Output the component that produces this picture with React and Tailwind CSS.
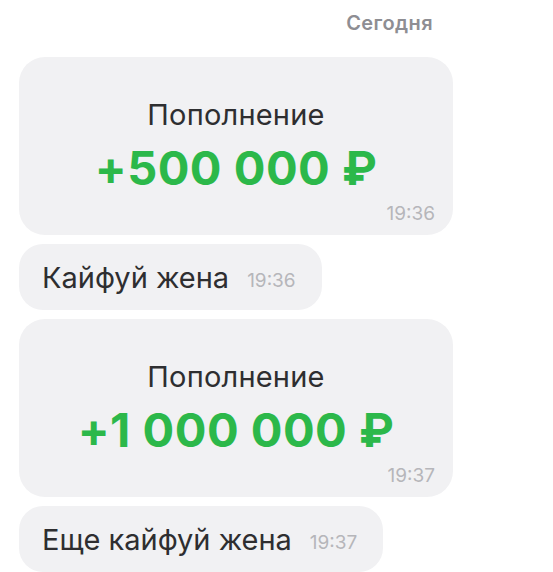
const font = { fontFamily: 'Inter, "Noto Sans", sans-serif' }

function Transfer({ amount, time }) {
  return (
    <div className="w-[434px] h-[178px] rounded-[26px] bg-[#f1f1f3] flex flex-col items-center pt-[41px] relative">
      <div className="text-[29px] leading-[34px] text-[#2e2e30] tracking-[0.2px]">Пополнение</div>
      <div className="text-[47px] leading-[52px] font-bold text-[#2cb84a] mt-[10px] tracking-[0.5px]">{amount}</div>
      <div className="absolute right-[18px] bottom-[7px] text-[19px] text-[#b6b6ba]">{time}</div>
    </div>
  )
}

function Message({ text, time }) {
  return (
    <div className="self-start h-[66px] rounded-[24px] bg-[#f1f1f3] flex items-center pl-[23px] pr-[26px] gap-[18px]">
      <span className="text-[29px] text-[#2e2e30] leading-none">{text}</span>
      <span className="text-[19px] text-[#b6b6ba] leading-none mt-[6px]">{time}</span>
    </div>
  )
}

export default function App() {
  return (
    <div className="w-[553px] h-[572px] bg-white overflow-hidden" style={font}>
      <div className="flex justify-end pr-[120px] pt-[11px]">
        <span className="text-[20px] leading-[24px] font-semibold text-[#8e8e93] tracking-[0.4px]">Сегодня</span>
      </div>
      <div className="flex flex-col gap-[9px] pl-[19px] mt-[22px]">
        <Transfer amount="+500 000 ₽" time="19:36" />
        <Message text="Кайфуй жена" time="19:36" />
        <Transfer amount="+1 000 000 ₽" time="19:37" />
        <Message text="Еще кайфуй жена" time="19:37" />
      </div>
    </div>
  )
}
